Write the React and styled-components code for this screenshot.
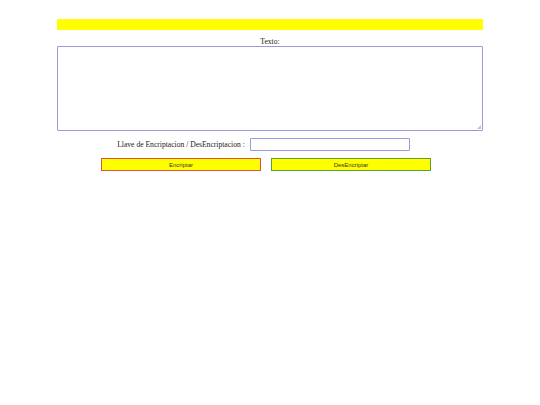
import React, { useState } from 'react'
import styled, { createGlobalStyle } from 'styled-components'

const GlobalStyle = createGlobalStyle`
  html, body {
    margin: 0;
    padding: 0;
    background: #ffffff;
  }
  body {
    padding: 8px 4px;
    font-family: "Liberation Serif", "Times New Roman", serif;
  }
`

const Page = styled.div`
  width: 80%;
  margin: 0 auto;
  display: flex;
  flex-direction: column;
`

const Banner = styled.div`
  margin-top: 11px;
  height: 11px;
  background: #ffff00;
`

const Caption = styled.label`
  margin-top: 8px;
  text-align: center;
  font-size: 7.6px;
  line-height: 8px;
  color: #222;
`

const TextWrap = styled.div`
  position: relative;
  display: flex;

  &::after {
    content: '';
    position: absolute;
    right: 2px;
    bottom: 2px;
    width: 0;
    height: 0;
    border-left: 4px solid transparent;
    border-bottom: 4px solid #c4c4c4;
    pointer-events: none;
  }
`

const TextBox = styled.textarea`
  box-sizing: border-box;
  width: 100%;
  height: 85px;
  margin: 0;
  border: 1px solid #9a9ad8;
  border-radius: 1px;
  padding: 2px;
  font-family: "Liberation Mono", monospace;
  font-size: 7px;
  resize: none;
  outline: none;
`

const KeyRow = styled.div`
  display: flex;
  align-items: center;
  justify-content: center;
  gap: 5px;
  margin-top: 7px;
  padding-right: 13px;
`

const KeyLabel = styled.span`
  font-size: 7.6px;
  color: #222;
  white-space: nowrap;
`

const KeyInput = styled.input`
  box-sizing: border-box;
  width: 160px;
  height: 13px;
  margin: 0;
  padding: 0 2px;
  border: 1px solid #9a9ad8;
  border-radius: 1px;
  font-size: 7px;
  outline: none;
`

const ButtonRow = styled.div`
  display: flex;
  justify-content: center;
  gap: 10px;
  margin-top: 7px;
  padding-right: 8px;
`

const ActionButton = styled.button`
  box-sizing: border-box;
  width: 160px;
  height: 13px;
  margin: 0;
  padding: 0;
  background: #ffff00;
  border: 1.5px solid ${p => p.$edge};
  font-family: "Liberation Sans", Arial, sans-serif;
  font-size: 6px;
  color: #333;
  cursor: pointer;
`

function App() {
  const [text, setText] = useState('')
  const [key, setKey] = useState('')

  return (
    <>
      <GlobalStyle />
      <Page>
        <Banner />
        <Caption htmlFor="texto">Texto:</Caption>
        <TextWrap>
          <TextBox id="texto" value={text} onChange={e => setText(e.target.value)} />
        </TextWrap>
        <KeyRow>
          <KeyLabel>Llave de Encriptacion / DesEncriptacion :</KeyLabel>
          <KeyInput value={key} onChange={e => setKey(e.target.value)} />
        </KeyRow>
        <ButtonRow>
          <ActionButton $edge="#e0503a">Encriptar</ActionButton>
          <ActionButton $edge="#5aa02a">DesEncriptar</ActionButton>
        </ButtonRow>
      </Page>
    </>
  )
}

export default App
